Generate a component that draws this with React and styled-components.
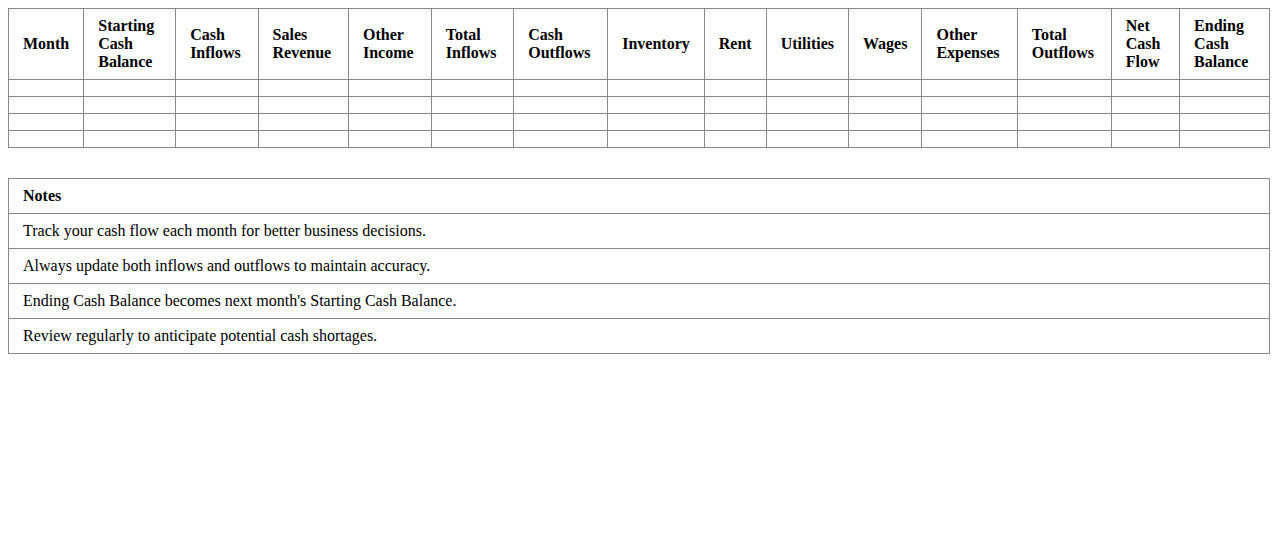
import React from "react";
import styled, {createGlobalStyle} from "styled-components";

const GlobalStyle = createGlobalStyle`
  body {
    margin: 8px;
    background: #fff;
    color: #000;
    font-family: "Liberation Serif", "Times New Roman", serif;
    font-size: 16px;
  }
`;

const Table = styled.table`
  width: 100%;
  border-collapse: collapse;
  margin-bottom: ${(p) => p.$gap || 0}px;
`;

const HeadCell = styled.th`
  border: 1px solid #888;
  padding: 8px 14px;
  text-align: left;
  vertical-align: middle;
  font-weight: bold;
`;

const Cell = styled.td`
  border: 1px solid #888;
  padding: 8px 14px;
  text-align: left;
`;

const columns = [
  "Month",
  "Starting Cash Balance",
  "Cash Inflows",
  "Sales Revenue",
  "Other Income",
  "Total Inflows",
  "Cash Outflows",
  "Inventory",
  "Rent",
  "Utilities",
  "Wages",
  "Other Expenses",
  "Total Outflows",
  "Net Cash Flow",
  "Ending Cash Balance",
];

const notes = [
  "Track your cash flow each month for better business decisions.",
  "Always update both inflows and outflows to maintain accuracy.",
  "Ending Cash Balance becomes next month's Starting Cash Balance.",
  "Review regularly to anticipate potential cash shortages.",
];

const App = () => {
  const rows = [0, 1, 2, 3];
  return (
    <>
      <GlobalStyle />
      <Table $gap={30}>
        <thead>
          <tr>
            {columns.map((c) => (
              <HeadCell key={c}>{c}</HeadCell>
            ))}
          </tr>
        </thead>
        <tbody>
          {rows.map((r) => (
            <tr key={r}>
              {columns.map((c) => (
                <Cell key={c}></Cell>
              ))}
            </tr>
          ))}
        </tbody>
      </Table>
      <Table>
        <thead>
          <tr>
            <HeadCell>Notes</HeadCell>
          </tr>
        </thead>
        <tbody>
          {notes.map((n) => (
            <tr key={n}>
              <Cell>{n}</Cell>
            </tr>
          ))}
        </tbody>
      </Table>
    </>
  );
};

export default App;
